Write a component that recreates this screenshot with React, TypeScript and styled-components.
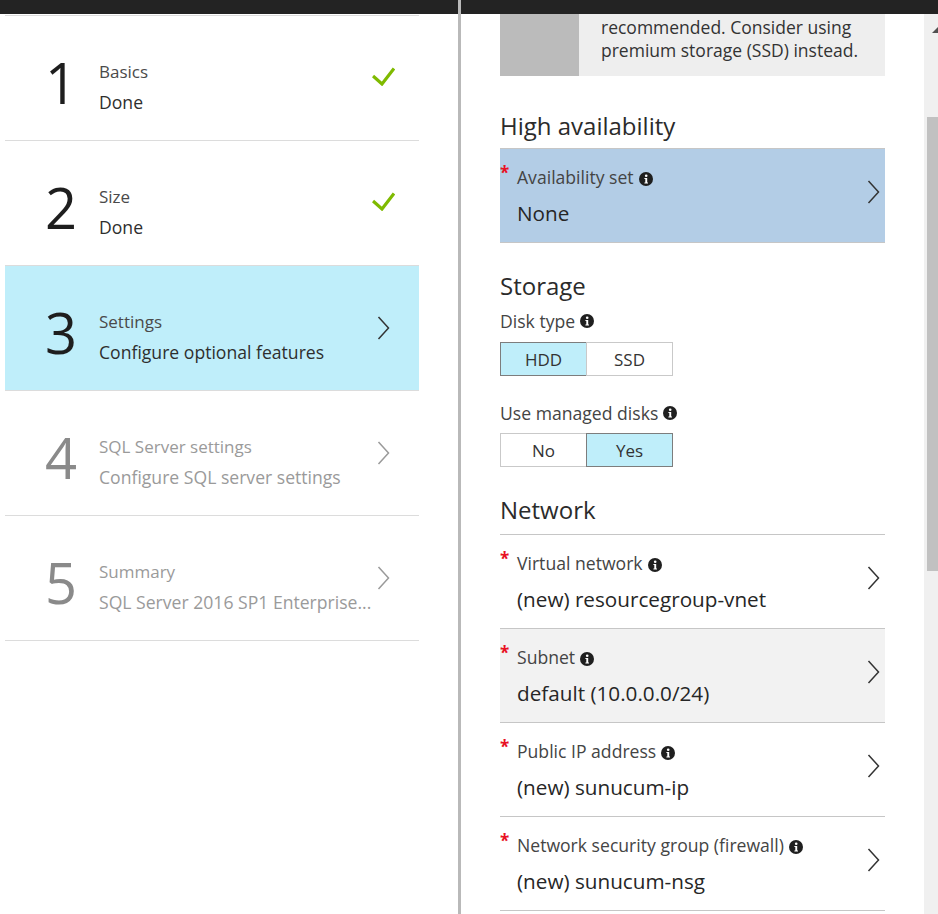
import React, { FC } from "react";
import styled, { createGlobalStyle } from "styled-components";

const GlobalStyle = createGlobalStyle`
  html, body {
    margin: 0;
    padding: 0;
    background: #fff;
  }
  body {
    font-family: "Open Sans", "Noto Sans", sans-serif;
    overflow: hidden;
  }
`;

const Screen = styled.div`
  width: 938px;
  height: 914px;
  display: flex;
  overflow: hidden;
  background: #fff;
`;

const BladeStrip = styled.div`
  height: 14px;
  flex-shrink: 0;
  background: #232323;
`;

const LeftBlade = styled.section`
  width: 458px;
  flex-shrink: 0;
  display: flex;
  flex-direction: column;
`;

const Divider = styled.div`
  width: 3px;
  flex-shrink: 0;
  background: #b9b9b9;
`;

const StepList = styled.ul`
  list-style: none;
  margin: 1px 0 0 5px;
  padding: 0;
  width: 414px;
  border-top: 1px solid #dcdcdc;
`;

const StepRow = styled.li<{ $active?: boolean }>`
  height: 125px;
  box-sizing: border-box;
  display: flex;
  align-items: center;
  padding: 18px 24px 0 40px;
  border-bottom: 1px solid #dcdcdc;
  background: ${(p) => (p.$active ? "#bfeefa" : "transparent")};
`;

const StepNumber = styled.div<{ $disabled?: boolean }>`
  width: 54px;
  flex-shrink: 0;
  margin-bottom: 10px;
  font-size: 56px;
  font-weight: 500;
  line-height: 1;
  color: ${(p) => (p.$disabled ? "#8a8a8a" : "#1e1e1e")};
`;

const StepText = styled.div`
  flex: 1;
  min-width: 0;
  display: flex;
  flex-direction: column;
`;

const StepTitle = styled.div<{ $disabled?: boolean }>`
  font-size: 17px;
  line-height: 30px;
  color: ${(p) => (p.$disabled ? "#9a9a9a" : "#4a4a4a")};
`;

const StepSub = styled.div<{ $disabled?: boolean }>`
  font-size: 17.6px;
  line-height: 30px;
  white-space: nowrap;
  color: ${(p) => (p.$disabled ? "#9a9a9a" : "#2e2e2e")};
`;

const StepMark = styled.div<{ $lift: number; $inset: number }>`
  flex-shrink: 0;
  display: flex;
  margin-bottom: ${(p) => p.$lift}px;
  margin-right: ${(p) => p.$inset}px;
`;

const RightBlade = styled.section`
  flex: 1;
  display: flex;
  flex-direction: column;
  min-width: 0;
`;

const RightBody = styled.div`
  flex: 1;
  display: flex;
`;

const Content = styled.div`
  width: 385px;
  padding-left: 39px;
  display: flex;
  flex-direction: column;
`;

const Notice = styled.div`
  display: flex;
  background: #eeeeee;
`;

const NoticeSide = styled.div`
  width: 79px;
  flex-shrink: 0;
  background: #bbbbbb;
`;

const NoticeText = styled.div`
  padding: 2px 10px 14px 22px;
  font-size: 17.5px;
  line-height: 23px;
  white-space: nowrap;
  color: #333;
`;

const SectionTitle = styled.h2<{ $top: number; $bottom: number }>`
  margin: ${(p) => p.$top}px 0 ${(p) => p.$bottom}px;
  font-size: 24px;
  font-weight: 400;
  line-height: 30px;
  color: #2b2b2b;
`;

const FieldLabel = styled.div<{ $top: number }>`
  margin-top: ${(p) => p.$top}px;
  display: flex;
  align-items: center;
  gap: 5px;
  font-size: 17.6px;
  line-height: 24px;
  color: #444;
`;

const Segmented = styled.div<{ $top: number }>`
  margin-top: ${(p) => p.$top}px;
  display: flex;
`;

const SegButton = styled.div<{ $selected?: boolean }>`
  width: 87px;
  height: 34px;
  box-sizing: border-box;
  display: flex;
  align-items: center;
  justify-content: center;
  font-size: 17px;
  color: #333;
  background: ${(p) => (p.$selected ? "#bfeefa" : "#fff")};
  border: 1px solid ${(p) => (p.$selected ? "#7d7d7d" : "#c9c9c9")};
  & + & {
    margin-left: -1px;
  }
`;

const PickerList = styled.div`
  border-top: 1px solid #c6c6c6;
`;

const PickerRow = styled.div<{ $tone: "blue" | "grey" | "plain"; $boxed?: boolean }>`
  height: ${(p) => (p.$boxed ? 95 : 94)}px;
  box-sizing: border-box;
  display: flex;
  align-items: center;
  padding-right: 5px;
  border-top: ${(p) => (p.$boxed ? "1px solid #c6c6c6" : "none")};
  border-bottom: 1px solid #c6c6c6;
  background: ${(p) =>
    p.$tone === "blue" ? "#b3cde6" : p.$tone === "grey" ? "#f2f2f2" : "#fff"};
`;

const PickerBody = styled.div`
  flex: 1;
  min-width: 0;
  align-self: flex-start;
  padding-top: 16px;
`;

const PickerLabel = styled.div`
  display: flex;
  align-items: center;
  font-size: 17.6px;
  line-height: 24px;
  white-space: nowrap;
  color: #444;
`;

const Required = styled.span`
  width: 17px;
  flex-shrink: 0;
  align-self: flex-start;
  margin-top: -1px;
  font-size: 17px;
  font-weight: 700;
  line-height: 18px;
  color: #e81123;
`;

const InfoSpacer = styled.span`
  display: inline-flex;
  margin-left: 5px;
  margin-top: 3px;
`;

const PickerValue = styled.div`
  margin-top: 10px;
  padding-left: 17px;
  font-size: 20.7px;
  line-height: 28px;
  white-space: nowrap;
  color: #262626;
`;

const PickerArrow = styled.div`
  display: flex;
  margin-bottom: 8px;
`;

const Scrollbar = styled.div`
  margin-left: auto;
  width: 14px;
  flex-shrink: 0;
  display: flex;
  flex-direction: column;
  background: #f0f0f0;
`;

const ScrollArrow = styled.div`
  height: 32px;
  display: flex;
  overflow: hidden;
`;

const ScrollThumb = styled.div<{ $offset: number; $size: number }>`
  margin: ${(p) => p.$offset}px 0 0 3px;
  height: ${(p) => p.$size}px;
  background: #c1c1c1;
`;

const Check: FC = () => (
  <svg width="23" height="19" viewBox="0 0 23 19">
    <path d="M1 9 L10 17 L22 1.5" fill="none" stroke="#7fba00" strokeWidth="3.2" />
  </svg>
);

const Chevron: FC<{ color?: string }> = ({ color = "#333" }) => (
  <svg width="13" height="24" viewBox="0 0 13 24">
    <polyline points="1.5,1 11.5,12 1.5,23" fill="none" stroke={color} strokeWidth="1.5" />
  </svg>
);

const Info: FC = () => (
  <svg width="14" height="14" viewBox="0 0 14 14">
    <circle cx="7" cy="7" r="7" fill="#1f1f1f" />
    <circle cx="7.2" cy="3.8" r="1.3" fill="#fff" />
    <path d="M5.4 6 H8.2 V10.4 H9 V11.4 H5.4 V10.4 H6.3 V7 H5.4 Z" fill="#fff" />
  </svg>
);

type Step = {
  n: number;
  title: string;
  sub: string;
  state: "done" | "active" | "todo";
};

const steps: Step[] = [
  { n: 1, title: "Basics", sub: "Done", state: "done" },
  { n: 2, title: "Size", sub: "Done", state: "done" },
  { n: 3, title: "Settings", sub: "Configure optional features", state: "active" },
  { n: 4, title: "SQL Server settings", sub: "Configure SQL server settings", state: "todo" },
  { n: 5, title: "Summary", sub: "SQL Server 2016 SP1 Enterprise...", state: "todo" },
];

type Picker = {
  label: string;
  value: string;
  tone: "blue" | "grey" | "plain";
};

const network: Picker[] = [
  { label: "Virtual network", value: "(new) resourcegroup-vnet", tone: "plain" },
  { label: "Subnet", value: "default (10.0.0.0/24)", tone: "grey" },
  { label: "Public IP address", value: "(new) sunucum-ip", tone: "plain" },
  { label: "Network security group (firewall)", value: "(new) sunucum-nsg", tone: "plain" },
];

const PickerItem: FC<{ item: Picker; boxed?: boolean }> = ({ item, boxed }) => (
  <PickerRow $tone={item.tone} $boxed={boxed}>
    <PickerBody>
      <PickerLabel>
        <Required>*</Required>
        {item.label}
        <InfoSpacer>
          <Info />
        </InfoSpacer>
      </PickerLabel>
      <PickerValue>{item.value}</PickerValue>
    </PickerBody>
    <PickerArrow>
      <Chevron />
    </PickerArrow>
  </PickerRow>
);

const App: FC = () => {
  return (
    <>
      <GlobalStyle />
      <Screen>
        <LeftBlade>
          <BladeStrip />
          <StepList>
            {steps.map((s) => {
              const off = s.state === "todo";
              return (
                <StepRow key={s.n} $active={s.state === "active"}>
                  <StepNumber $disabled={off}>{s.n}</StepNumber>
                  <StepText>
                    <StepTitle $disabled={off}>{s.title}</StepTitle>
                    <StepSub $disabled={off}>{s.sub}</StepSub>
                  </StepText>
                  {s.state === "done" ? (
                    <StepMark $lift={22} $inset={0}>
                      <Check />
                    </StepMark>
                  ) : (
                    <StepMark $lift={18} $inset={5}>
                      <Chevron color={off ? "#9a9a9a" : "#333"} />
                    </StepMark>
                  )}
                </StepRow>
              );
            })}
          </StepList>
        </LeftBlade>
        <Divider />
        <RightBlade>
          <BladeStrip />
          <RightBody>
            <Content>
              <Notice>
                <NoticeSide />
                <NoticeText>
                  recommended. Consider using
                  <br />
                  premium storage (SSD) instead.
                </NoticeText>
              </Notice>

              <SectionTitle $top={35} $bottom={7}>
                High availability
              </SectionTitle>
              <PickerItem
                boxed
                item={{ label: "Availability set", value: "None", tone: "blue" }}
              />

              <SectionTitle $top={28} $bottom={0}>
                Storage
              </SectionTitle>
              <FieldLabel $top={8}>
                Disk type <Info />
              </FieldLabel>
              <Segmented $top={9}>
                <SegButton $selected>HDD</SegButton>
                <SegButton>SSD</SegButton>
              </Segmented>
              <FieldLabel $top={25}>
                Use managed disks <Info />
              </FieldLabel>
              <Segmented $top={8}>
                <SegButton>No</SegButton>
                <SegButton $selected>Yes</SegButton>
              </Segmented>

              <SectionTitle $top={28} $bottom={9}>
                Network
              </SectionTitle>
              <PickerList>
                {network.map((item) => (
                  <PickerItem key={item.label} item={item} />
                ))}
              </PickerList>
            </Content>
            <Scrollbar>
              <ScrollArrow>
                <svg width="14" height="32" viewBox="0 0 14 32">
                  <polygon points="8,19 14,13 20,19" fill="#505050" />
                </svg>
              </ScrollArrow>
              <ScrollThumb $offset={71} $size={454} />
            </Scrollbar>
          </RightBody>
        </RightBlade>
      </Screen>
    </>
  );
};

export default App;
